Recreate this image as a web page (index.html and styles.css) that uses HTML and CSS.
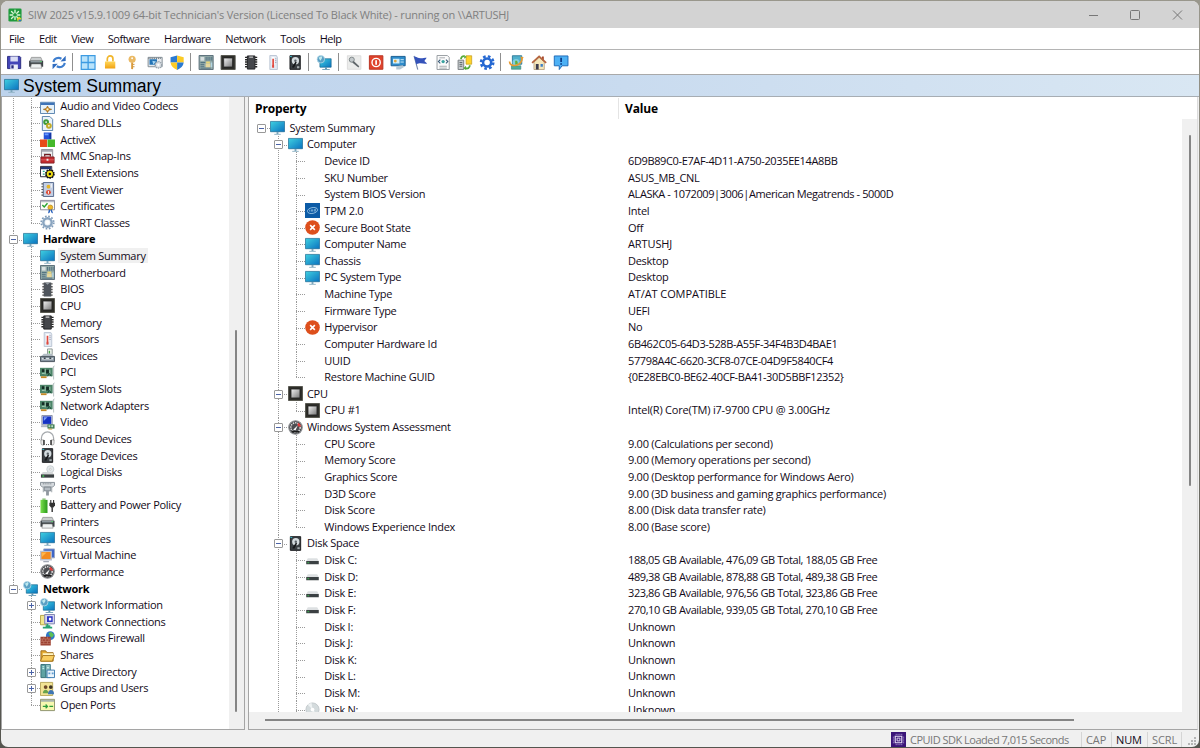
FILE: index.html
```html
<!DOCTYPE html>
<html lang="en">
<head>
<meta charset="utf-8">
<title>SIW 2025</title>
<link rel="stylesheet" href="styles.css">
</head>
<body>
<svg class="sprite" aria-hidden="true">
  <defs>
    <linearGradient id="g-screen" x1="0" y1="0" x2="1" y2="1"><stop offset="0" stop-color="#3fd0e0"/><stop offset="1" stop-color="#0a72c0"/></linearGradient>
    <linearGradient id="g-chip" x1="0" y1="0" x2="1" y2="1"><stop offset="0" stop-color="#f4f4f4"/><stop offset="1" stop-color="#777"/></linearGradient>
    <linearGradient id="g-gold" x1="0" y1="0" x2="0" y2="1"><stop offset="0" stop-color="#ffd75a"/><stop offset="1" stop-color="#f0a010"/></linearGradient>
    <linearGradient id="g-green" x1="0" y1="0" x2="1" y2="0"><stop offset="0" stop-color="#7be04e"/><stop offset="1" stop-color="#2a9a1c"/></linearGradient>
  </defs>
  <symbol id="logo" viewBox="0 0 16 16"><rect x=".5" y=".5" width="15" height="15" rx="1.5" fill="#1f9a3c"/><g stroke="#d8f5d4" stroke-width="1.6" stroke-linecap="round"><path d="M8 2.5v3M8 10v3M2.5 8h3M10.500 8h3M4 4l2 2M10 10l2 2M4 12l2-2M10 6l2-2"/></g><path d="M10 12l3-2 2 2v3h-4z" fill="#e8d02a"/><path d="M12 13h3v2h-3z" fill="#2a72c8"/></symbol>
  <symbol id="monitor" viewBox="0 0 16 16"><path d="M.5 1.500h15v11H.5z" fill="url(#g-screen)" stroke="#14638c" stroke-width=".7"/><path d="M7 12.800h2V15H7z" fill="#7aa4bb"/><path d="M4.500 15.300h7" stroke="#8fb2c4"/></symbol>
  <symbol id="net" viewBox="0 0 16 16"><path d="M3.500 4h12v9h-12z" fill="url(#g-screen)" stroke="#14638c" stroke-width=".7"/><path d="M9 13h2v2H9z" fill="#5d93b0"/><path d="M6 15.500h8" stroke="#6f9fb8"/><circle cx="4.500" cy="4.500" r="4" fill="#5a9fc4" stroke="#b9dcea" stroke-width=".8"/><path d="M2 3l3-2 1 2-2 3zM5 6l2-1" fill="#bde8ee"/></symbol>
  <symbol id="codec" viewBox="0 0 16 16"><path d="M.5 3.500h15v12H.5z" fill="#e6f2fa" stroke="#547fae"/><path d="M1 4h14v2.500H1z" fill="#3f74b8"/><path d="M3.500 11l3-.800L8 7.500l1.500 2.700 3 .800-3 .900L8 14.500l-1.500-2.600z" fill="#d58a18" stroke="#8a5a18" stroke-width=".6"/><circle cx="8" cy="11" r="1.200" fill="#fff4c0"/></symbol>
  <symbol id="dll" viewBox="0 0 16 16"><path d="M2.500.5h8l3 3v12h-11z" fill="#e9f2fb" stroke="#5580aa"/><circle cx="6.500" cy="6.500" r="2" fill="#fff" stroke="#3c9a38" stroke-width="2.200"/><circle cx="9.500" cy="10.500" r="2" fill="#fff" stroke="#c2ac28" stroke-width="2.200"/></symbol>
  <symbol id="activex" viewBox="0 0 16 16"><path d="M4 .5h8V8H4z" fill="#2452d8"/><path d="M12 .5V8l-2-1V2z" fill="#1436a0"/><path d="M0 8h7.500v8H0z" fill="#e84a18"/><path d="M8 8h8v8H8z" fill="#45b82a"/><path d="M5 1.500h4v2H5z" fill="#6a9cff"/></symbol>
  <symbol id="mmc" viewBox="0 0 16 16"><path d="M1.500.5h12v9h-12z" fill="#f1f1f1" stroke="#8a8a92"/><path d="M2 1h11v2H2z" fill="#a5a7b0"/><path d="M4 5h7" stroke="#b5b5b5"/><path d="M1 8.500h14v6.500H1z" fill="#c42b2e" stroke="#862024"/><path d="M5 8V6h6v2" fill="none" stroke="#711c20" stroke-width="1.300"/><path d="M1 11.500h14" stroke="#e07a78" stroke-width=".7"/><path d="M7 10.500h2v2H7z" fill="#eee"/></symbol>
  <symbol id="shell" viewBox="0 0 16 16"><path d="M.5 1.500h12v11H.5z" fill="#fff" stroke="#223"/><path d="M1 2h11v2.500H1z" fill="#223a78"/><path d="M3 6h2v1.500H3zM3 9h2v1.500H3z" fill="#29ab90"/><circle cx="10.500" cy="9.500" r="4.300" fill="#111" stroke="#111" stroke-width="1.800" stroke-dasharray="1.700 1"/><circle cx="10.500" cy="9.500" r="3.300" fill="#f1de16"/><circle cx="10.500" cy="9.500" r="1.300" fill="#111"/></symbol>
  <symbol id="event" viewBox="0 0 16 16"><path d="M3.500.5h11v15h-11z" fill="#c3cfe4" stroke="#53678c"/><path d="M1.500 2h2M1.500 5h2M1.500 8h2M1.500 11h2M1.500 14h2" stroke="#555" stroke-width="1.200"/><circle cx="9" cy="5" r="2" fill="#e6b426"/><circle cx="9" cy="11" r="2.600" fill="#db4a33"/><path d="M9 9.500v3M12 2v4" stroke="#fff"/></symbol>
  <symbol id="cert" viewBox="0 0 16 16"><path d="M.5 1.500h15v10H.5z" fill="#fcfcf5" stroke="#889"/><path d="M1 2h14v1.500H1z" fill="#b7bdc7"/><path d="M2.500 6.500l2 2 3.500-4" fill="none" stroke="#25a32e" stroke-width="1.500"/><circle cx="11" cy="9" r="2.600" fill="#efb827" stroke="#a87713" stroke-width=".6"/><path d="M9.500 11l-1 4.500 2-1 .5-3zM12.500 11l1.500 4.500-2-1-.8-3z" fill="#2c64bd"/></symbol>
  <symbol id="gear" viewBox="0 0 16 16"><circle cx="8" cy="8" r="6.700" fill="none" stroke="#7e9ab8" stroke-width="1.800" stroke-dasharray="1.800 1.700"/><circle cx="8" cy="8" r="4.500" fill="#e7eef5" stroke="#8aa5c0" stroke-width="2.600"/><circle cx="8" cy="8" r="2.300" fill="#fff"/></symbol>
  <symbol id="board" viewBox="0 0 16 16"><path d="M.5.5h15v15H.5z" fill="#93aaa8" stroke="#566b78"/><path d="M2 2h4v4H2z" fill="#d8dfe0"/><path d="M8 2v4M10 2v4M12 2v4M14 2v4M2 8h5M2 10h4M2 12h4M2 14h11" stroke="#3f6275" stroke-width=".8"/><path d="M8 7h4v2H8z" fill="#e8d777"/><path d="M7.500 9h5v4h-5z" fill="#e6d79c"/><path d="M13 8h1.500v5H13z" fill="#b4d6e4"/></symbol>
  <symbol id="bios" viewBox="0 0 16 16"><path d="M4 .5h8v15H4z" fill="#4f555c"/><path d="M2.500 2h2M2.500 5h2M2.500 8h2M2.500 11h2M2.500 14h2M11.500 2h2M11.500 5h2M11.500 8h2M11.500 11h2M11.500 14h2" stroke="#555" stroke-width="1.500"/><path d="M6 1h4l-2 2z" fill="#9ba3aa"/></symbol>
  <symbol id="chip" viewBox="0 0 16 16"><path d="M.5.5h15v15H.5z" fill="#2e2e2a" stroke="#55554d"/><path d="M3.300 3.300h9.400v9.400H3.300z" fill="url(#g-chip)" stroke="#111" stroke-width=".6"/></symbol>
  <symbol id="mem" viewBox="0 0 16 16"><path d="M4 1h8v14H4z" fill="#45474b" stroke="#1f2022"/><path d="M1.500 2.500h2.500M1.500 5h2.500M1.500 7.500h2.500M1.500 10h2.500M1.500 12.500h2.500M12 2.500h2.500M12 5h2.500M12 7.500h2.500M12 10h2.500M12 12.500h2.500" stroke="#272727" stroke-width="1.500"/><path d="M6 1.500h4v1.500H6z" fill="#c8c8c8"/></symbol>
  <symbol id="thermo" viewBox="0 0 16 16"><path d="M4.500.5h7l1 2v13h-8z" fill="#e3e9f2" stroke="#b9c4d3"/><path d="M8 2v8" stroke="#fff" stroke-width="3"/><path d="M8 4v8.500" stroke="#e0493f" stroke-width="1.800"/><path d="M7 11h2v2.500H7z" fill="#e0493f"/><path d="M10 4h1.500M10 6h1.500M10 8h1.500" stroke="#aab"/></symbol>
  <symbol id="devices" viewBox="0 0 16 16"><path d="M8 1h5v6H8z" fill="#edf2ed" stroke="#8a9492"/><path d="M10 3v3" stroke="#46a344" stroke-width="1.500"/><path d="M1 9l3-3h8l3 3z" fill="#b3bec5"/><path d="M.5 9h15v5.500H.5z" fill="#8794a0" stroke="#47525b"/><path d="M2 11.500h12" stroke="#dde3e7" stroke-width="1.500"/><path d="M4 11h2M10 11h2" stroke="#3a444c" stroke-width="1.500"/></symbol>
  <symbol id="card" viewBox="0 0 16 16"><path d="M0 3h13.500v9H0z" fill="#4c8468"/><path d="M2 4.500h3v3H2zM6.500 5h3v4h-3z" fill="#142d25"/><path d="M2 9h3M10.500 5v5M5.500 4v6" stroke="#a8cdb6"/><path d="M1 12h6v2H1z" fill="#c58a28"/><path d="M8 12l2-3 2 3" fill="none" stroke="#143" stroke-width="1"/><path d="M14.500 1.500v14M13.500 2.500l2-1.500" fill="none" stroke="#b5c0c0"/></symbol>
  <symbol id="video" viewBox="0 0 16 16"><path d="M2 .5h11v10H2z" fill="#dbe0ec" stroke="#888fa5"/><path d="M3 1.500h9v8H3z" fill="#1633c4"/><path d="M4 2.500h4l-4 4z" fill="#7fa3f8"/><path d="M1 11h8v2H1z" fill="#b3b8c2"/><path d="M8 10h7.500v4.500H8z" fill="#3c7950"/><path d="M9 11h2v2H9zM12 11h2v2h-2z" fill="#bdddc5"/><path d="M9 14.500h4v1H9z" fill="#cc9b38"/></symbol>
  <symbol id="phones" viewBox="0 0 16 16"><path d="M1.500 11V7.500a6.500 6.500 0 0 1 13 0V11" fill="none" stroke="#a5a9ad" stroke-width="1.300"/><path d="M1 9.500h3v5.500H3a2 2 0 0 1-2-2zM15 9.500h-3v5.500h1a2 2 0 0 0 2-2z" fill="#eee" stroke="#888" stroke-width=".7"/><path d="M3.500 9.500H5v5.500H3.500zM11 9.500h1.500v5.500H11z" fill="#2c2c2c"/><path d="M6.500 14.500h1M8.500 14.500h1" stroke="#333"/></symbol>
  <symbol id="hdd" viewBox="0 0 16 16"><path d="M2.500.7h11v14.600h-11z" fill="#3a3f43" stroke="#17191b"/><circle cx="8.300" cy="6" r="3.900" fill="#d5dcdf"/><circle cx="8.300" cy="6" r="1.300" fill="#596167"/><path d="M4.500 13l4-6 1.200 1-3 5.500z" fill="#16181a"/><path d="M10 12h2.500v2H10z" fill="#a4abad"/><path d="M2.500 1.500h2" stroke="#3ac5d5"/></symbol>
  <symbol id="ldisk" viewBox="0 0 16 16"><circle cx="11" cy="4.500" r="3.800" fill="#e4e9eb" stroke="#bcc4c8" stroke-width=".7"/><circle cx="11" cy="4.500" r="1" fill="#fff" stroke="#aaa" stroke-width=".5"/><path d="M3 7.500h10l2 2.500H1z" fill="#d4d7d9"/><path d="M1 10h14v3.500H1z" fill="#3b4043"/><path d="M2.500 11h2v1.500h-2z" fill="#45d15a"/></symbol>
  <symbol id="disk" viewBox="0 0 16 16"><path d="M3 5.500h10l1.700 3H1.300z" fill="#dde0e2"/><path d="M1.300 8.500h13.400v3.500H1.300z" fill="#3b4043"/><path d="M2.500 9.500h2v1.500h-2z" fill="#3b9a4c"/></symbol>
  <symbol id="cd" viewBox="0 0 16 16"><circle cx="8" cy="8" r="7" fill="#d4dbdd" stroke="#c2c9cc"/><path d="M8 8L3 3a7 7 0 0 1 4-2zM8 8l5 5a7 7 0 0 1-4 2z" fill="#eef2f3"/><circle cx="8" cy="8" r="2" fill="#fff"/></symbol>
  <symbol id="ports" viewBox="0 0 16 16"><path d="M.5 1.500h15v3l-2 2h-11l-2-2z" fill="#d4d9dd" stroke="#858e95"/><path d="M3 3h10" stroke="#666e75" stroke-dasharray="1 1"/><path d="M4.500 6.500h7v4h-7z" fill="#b4bbc2" stroke="#7a838b"/><path d="M6.500 10.500h3v5h-3z" fill="#90989f"/><path d="M3.500 7v5M12.500 7v5" stroke="#9aa2a8"/></symbol>
  <symbol id="battery" viewBox="0 0 16 16"><path d="M.5 2H8v14H.5z" fill="url(#g-green)"/><path d="M2.500.5h3.500V2H2.500z" fill="#83bd70"/><path d="M11.500 2v4M14.500 2v4" stroke="#333" stroke-width="1.200"/><path d="M10 5h6v3l-2 2.500h-2L10 8z" fill="#333"/><path d="M13 10v5" stroke="#333" stroke-width="1.500"/></symbol>
  <symbol id="printer" viewBox="0 0 16 16"><path d="M3 2.500h10l1.500 3.500h-13z" fill="#c9cdce" stroke="#777" stroke-width=".6"/><path d="M.5 6h15v6.500H.5z" fill="#3d4347"/><path d="M2 6h12v2H2z" fill="#8d979d"/><path d="M3 9.500h10l1 4.500H2z" fill="#eff2f3" stroke="#777" stroke-width=".6"/><path d="M12 7h2" stroke="#54ce66"/></symbol>
  <symbol id="vm" viewBox="0 0 16 16"><path d="M4 1h11.500v9.500H4z" fill="#3d65c8" stroke="#9aa6c4"/><path d="M.8 3.500h11.200v9H.8z" fill="#f38b21" stroke="#b9bfd0" stroke-width="1.400"/><path d="M2 4.700h5l-5 5z" fill="#ffb64b"/><path d="M3.500 14.500h6" stroke="#a3a9b6" stroke-width="1.500"/></symbol>
  <symbol id="gauge" viewBox="0 0 16 16"><circle cx="8" cy="8" r="7.200" fill="#4c4e52" stroke="#8e9093" stroke-width="1.200"/><circle cx="8" cy="8" r="5" fill="none" stroke="#ddd" stroke-width="1.600" stroke-dasharray="1.500 1"/><path d="M11 3a6 6 0 0 1 3 4l-3 0-1-2z" fill="#e33b3b"/><path d="M5.500 10.500l5-5-2.500 5.500z" fill="#fff"/><path d="M4 12.500h8" stroke="#1c1c1c" stroke-width="1.500"/></symbol>
  <symbol id="conn" viewBox="0 0 16 16"><path d="M.5 1.500h7v10h-7z" fill="#f1e68c" stroke="#b3a245"/><path d="M5 .5h10.500v10H5z" fill="#d5d7ee" stroke="#7c80ad"/><path d="M7.500 2.500h6v6h-6z" fill="#2932c4"/><path d="M9.500 4H12v3H9.500z" fill="#fff"/><path d="M8 10.500v3M3 14.500h10" stroke="#27a273" stroke-width="1.800"/><path d="M6 12h5v3H6z" fill="#27a273"/></symbol>
  <symbol id="firewall" viewBox="0 0 16 16"><circle cx="11" cy="5" r="4.700" fill="#2d76c9"/><path d="M9 2l3-1 3 3-2 3-2-1z" fill="#5cc054"/><path d="M.5 6h11v9.500H.5z" fill="#9b4031"/><path d="M.5 8.500h11M.5 11h11M.5 13.500h11M4 6v2.500M8 6v2.500M2.500 8.500V11M6 8.500V11M9.500 8.500V11M4 11v2.500M8 11v2.500" stroke="#c98573" stroke-width=".6"/></symbol>
  <symbol id="share" viewBox="0 0 16 16"><path d="M1 3h5l1.500 2H14v9H1z" fill="#e5ad35" stroke="#9c6b16"/><path d="M3 5.500h11V9H3z" fill="#fff6c4"/><path d="M.5 14L3 8h12.500l-2.500 6z" fill="#f8cd5f" stroke="#a87720"/></symbol>
  <symbol id="ad" viewBox="0 0 16 16"><path d="M1 .5h5v14H1z" fill="#5ea2a2" stroke="#346d74"/><path d="M6 .5h5v14H6z" fill="#8dbfc0" stroke="#3d7c84"/><path d="M2.500 3h2M2.500 5h2M7.500 4h2" stroke="#dff"/><path d="M7.500 6.500h8v8h-8z" fill="#eaf4fb" stroke="#3877ae"/><path d="M9 9h2v2H9zM12.500 9h2v2h-2z" fill="#5f9bd0"/></symbol>
  <symbol id="users" viewBox="0 0 16 16"><path d="M.5 1.500h13v14H.5z" fill="#f2e394" stroke="#b8a75a"/><circle cx="6" cy="6.500" r="2" fill="#6e4928"/><circle cx="11.500" cy="6.500" r="2" fill="#3d3325"/><path d="M3 13c0-5 6-5 6 0z" fill="#68a34c"/><path d="M8.500 14c0-6 6.500-6 6.500 0z" fill="#3f76b4"/></symbol>
  <symbol id="openports" viewBox="0 0 16 16"><path d="M.5 2.500h15v12H.5z" fill="#f7f8b0" stroke="#8b8f6a"/><path d="M1 3h14v2H1z" fill="#a9b5ad"/><path d="M3 10h5M6 8l2 2-2 2M10 10h4" fill="none" stroke="#2f9c3c" stroke-width="1.300"/></symbol>
  <symbol id="intel" viewBox="0 0 16 16"><path d="M0 0h16v16H0z" fill="#0c5ba6"/><ellipse cx="8" cy="8" rx="5.500" ry="3.100" fill="none" stroke="#a9d2ee" stroke-width=".8" transform="rotate(-12 8 8)"/><path d="M5 7.200v2M6.800 9.200V7.300h1.400v1.900M10 6.500v2.700M11.300 6v3" fill="none" stroke="#bfe0f6" stroke-width=".6"/></symbol>
  <symbol id="cross" viewBox="0 0 16 16"><circle cx="8" cy="8" r="7.800" fill="#dd4f1c"/><path d="M5.500 5.500l5 5M10.500 5.500l-5 5" stroke="#fff" stroke-width="1.700"/></symbol>
  <symbol id="save" viewBox="0 0 16 16"><path d="M1 1.500h13l1 1v12H1z" fill="#4446b8" stroke="#272a7e"/><path d="M4 1.500h8v5.500H4z" fill="#d9dcf4"/><path d="M4 10h8v5H4z" fill="#eceef8"/><path d="M5 11h2.500v3.500H5z" fill="#272a7e"/></symbol>
  <symbol id="refresh" viewBox="0 0 16 16"><path d="M2 7.500C2.500 3.500 7 2 10.500 4M14 8.500c-.5 4-5 5.500-8.500 3.500" fill="none" stroke="#3f7fcf" stroke-width="2.200"/><path d="M9.500 6.800L15 6.500V.8zM6.500 9.200L1 9.500v5.700z" fill="#2f6cc0"/></symbol>
  <symbol id="win" viewBox="0 0 16 16"><path d="M0 0h16v16H0z" fill="#3c9be2"/><path d="M1.300 1.300h6v6h-6zM8.700 1.300h6v6h-6zM1.300 8.700h6v6h-6zM8.700 8.700h6v6h-6z" fill="#b9e3fb"/></symbol>
  <symbol id="lock" viewBox="0 0 16 16"><path d="M5 7V4a3 3 0 0 1 6 0v3" fill="none" stroke="#f1b62c" stroke-width="1.800"/><path d="M2.500 7h11v7.500h-11z" fill="url(#g-gold)"/></symbol>
  <symbol id="key" viewBox="0 0 16 16"><circle cx="8" cy="4.500" r="3.800" fill="#eab964"/><circle cx="8" cy="3.500" r="1" fill="#fff"/><path d="M7 8h2v6l-1 1.500-1-1.500z" fill="#d99b3c"/><path d="M9 10h1.500M9 12.500h1.500" stroke="#c58a2f"/></symbol>
  <symbol id="screengear" viewBox="0 0 16 16"><path d="M.5 2.500h15v10H.5z" fill="#e6e9ec" stroke="#7f8a92"/><path d="M2 4.500h8v6H2z" fill="#2474b6"/><path d="M1 3.500h14" stroke="#45505a" stroke-dasharray="1 1"/><path d="M5 6l4 1-3 3z" fill="#a4d4f2"/><circle cx="11.500" cy="10.500" r="3.400" fill="#dfe3e7" stroke="#98a3ac" stroke-width="1.400" stroke-dasharray="1.500 .7"/><circle cx="11.500" cy="10.500" r="1.200" fill="#fff"/></symbol>
  <symbol id="shield" viewBox="0 0 16 16"><path d="M8 .5l-7 2V8h7z" fill="#2b7ad2"/><path d="M8 .5l7 2V8H8z" fill="#fbcb26"/><path d="M1 8h7v8C4 14 1.500 12 1 8z" fill="#fbcb26"/><path d="M15 8H8v8c4-2 6.500-4 7-8z" fill="#2b7ad2"/></symbol>
  <symbol id="tool" viewBox="0 0 16 16"><path d="M.8.8h14.400v14.400H.8z" fill="#ebeceb" stroke="#dcdcdc"/><circle cx="5.500" cy="5" r="2.700" fill="#c2c8cb" stroke="#7d8588"/><path d="M7.500 6.500l6 5.500-1 1.300-6.500-5.300z" fill="#5f666a"/></symbol>
  <symbol id="power" viewBox="0 0 16 16"><path d="M.8.8h14.400v14.400H.8z" fill="#df432c" stroke="#b8301e"/><circle cx="8" cy="8" r="4.400" fill="none" stroke="#fff" stroke-width="1.500"/><path d="M8 5.500v5" stroke="#fff" stroke-width="1.800"/></symbol>
  <symbol id="remote" viewBox="0 0 16 16"><path d="M.5 1.500h15v10H.5z" fill="#2e8ccb" stroke="#165b90"/><path d="M2.500 4h7v5h-7z" fill="#d3effa"/><circle cx="5" cy="6.500" r="1.500" fill="#e0a53c"/><path d="M10.500 5h3.500M10.500 7.500h3.500" stroke="#d3effa"/><path d="M6 12l7-1 1 2-4 2.500H6z" fill="#b5c8d4"/></symbol>
  <symbol id="flag" viewBox="0 0 16 16"><path d="M1.500 1l4 14.500" stroke="#7689ad" stroke-width="1.200"/><path d="M1.500 1.500c3 0 4 2 7 2s4-.5 6.500-.5L12.500 6.500l3 2.500c-4 1-7-1.500-11.500 1z" fill="#3452ba"/></symbol>
  <symbol id="doc" viewBox="0 0 16 16"><path d="M1.500.5h11l2 2v13h-13z" fill="#fbfbfb" stroke="#93999e"/><path d="M4 3h6M4 12h8M4 14h8" stroke="#a4a9ad"/><path d="M5 5L3 7l2 2M11 5l2 2-2 2" fill="none" stroke="#3c5d7a" stroke-width="1.200"/><circle cx="8" cy="7" r="1.800" fill="#3ba3a0"/></symbol>
  <symbol id="dbsync" viewBox="0 0 16 16"><path d="M9 .8h6v9H9z" fill="#ffd329" stroke="#bd9416" stroke-width=".7"/><path d="M.5 5.500h6v10h-6z" fill="#c6cacd" stroke="#777c80"/><path d="M2 8h3M2 10h3M2 12h3" stroke="#5d6468"/><path d="M3.500 4.500C4 1.500 6 1 7 1.500M13 11c0 3-2.500 4-5 3" fill="none" stroke="#53aa39" stroke-width="1.900"/><path d="M7 0l2.500 2L7 4zM9 11.500L6 14l3 2z" fill="#53aa39"/></symbol>
  <symbol id="cog" viewBox="0 0 16 16"><circle cx="8" cy="8" r="6.600" fill="none" stroke="#2568d2" stroke-width="2.600" stroke-dasharray="2.800 2.384"/><circle cx="8" cy="8" r="4.300" fill="none" stroke="#2568d2" stroke-width="2.700"/></symbol>
  <symbol id="update" viewBox="0 0 16 16"><path d="M4 .8h10v9H4z" fill="#4fb0cc" stroke="#2f7c9a"/><path d="M3 11.500h10v3.700H3z" fill="#4fae9a" stroke="#2f7c7a" stroke-width=".6"/><circle cx="8" cy="8" r="3.800" fill="#82cfdf"/><path d="M1 7c0 6 11 6 13.500-2.500" fill="none" stroke="#e79a31" stroke-width="1.800"/><path d="M12.500 1.500l3.500 1-2 3.500z" fill="#e79a31"/><path d="M7 6h2l1 3-3 1z" fill="#63ae3a"/></symbol>
  <symbol id="home" viewBox="0 0 16 16"><path d="M11 1.500h2V6h-2z" fill="#a74629"/><path d="M2.500 7.500L8 2.500l5.500 5v8h-11z" fill="#f6e7bb" stroke="#a08764" stroke-width=".7"/><path d="M.5 8.500L8 1.500l7.500 7" fill="none" stroke="#b5653f" stroke-width="1.900"/><path d="M4.500 9.500h3v6h-3z" fill="#3d3b4c"/><path d="M9.500 9.500h2.500v3H9.500z" fill="#3e80c7"/></symbol>
  <symbol id="info" viewBox="0 0 16 16"><path d="M.7 1h14.600v10.500H9l-3 4v-4H.7z" fill="#4db1f5" stroke="#1b68b6"/><path d="M8 3v4.500M8 8.700v1.600" stroke="#0c3d88" stroke-width="1.900"/></symbol>
  <symbol id="cpuid" viewBox="0 0 16 16"><path d="M0 0h16v16H0z" fill="#3a1478"/><path d="M4.500 4.500h7v7h-7z" fill="none" stroke="#e5dcf5" stroke-width="1.200"/><path d="M6.500 6.500h3v3h-3z" fill="none" stroke="#e5dcf5"/><path d="M5 2.500h7M5 13.500h7M2.500 5v7M13.500 5v7" stroke="#bba8e0" stroke-dasharray="1 1"/></symbol>
</svg>

<div class="window">
  <header class="titlebar">
    <svg class="icon"><use href="#logo"/></svg>
    <span class="title">SIW 2025 v15.9.1009 64-bit Technician's Version (Licensed To Black White) - running on \\ARTUSHJ</span>
    <svg class="controls" viewBox="0 0 94 12"><path d="M0 6.500h9M41.500 2.500a1 1 0 0 1 1-1h7a1 1 0 0 1 1 1v7a1 1 0 0 1-1 1h-7a1 1 0 0 1-1-1zM84 1.500l9 9M93 1.500l-9 9"/></svg>
  </header>
  <nav class="menu"><span>File</span><span>Edit</span><span>View</span><span>Software</span><span>Hardware</span><span>Network</span><span>Tools</span><span>Help</span></nav>
  <div class="toolbar">
    <svg class="icon"><use href="#save"/></svg><svg class="icon"><use href="#printer"/></svg><svg class="icon"><use href="#refresh"/></svg>
    <i></i>
    <svg class="icon"><use href="#win"/></svg><svg class="icon"><use href="#lock"/></svg><svg class="icon"><use href="#key"/></svg><svg class="icon"><use href="#screengear"/></svg><svg class="icon"><use href="#shield"/></svg>
    <i></i>
    <svg class="icon"><use href="#board"/></svg><svg class="icon"><use href="#chip"/></svg><svg class="icon"><use href="#mem"/></svg><svg class="icon"><use href="#thermo"/></svg><svg class="icon"><use href="#hdd"/></svg>
    <i></i>
    <svg class="icon"><use href="#net"/></svg>
    <i></i>
    <svg class="icon"><use href="#tool"/></svg><svg class="icon"><use href="#power"/></svg><svg class="icon"><use href="#remote"/></svg><svg class="icon"><use href="#flag"/></svg><svg class="icon"><use href="#doc"/></svg><svg class="icon"><use href="#dbsync"/></svg><svg class="icon"><use href="#cog"/></svg>
    <i></i>
    <svg class="icon"><use href="#update"/></svg><svg class="icon"><use href="#home"/></svg><svg class="icon"><use href="#info"/></svg>
  </div>
  <div class="heading"><svg class="icon"><use href="#monitor"/></svg><h1>System Summary</h1></div>

  <main class="panes">
    <section class="nav-pane">
      <ul class="tree nav-tree">
        <li class="branch">
          <ul>
            <li><div class="row"><svg class="icon"><use href="#codec"/></svg><span>Audio and Video Codecs</span></div></li>
            <li><div class="row"><svg class="icon"><use href="#dll"/></svg><span>Shared DLLs</span></div></li>
            <li><div class="row"><svg class="icon"><use href="#activex"/></svg><span>ActiveX</span></div></li>
            <li><div class="row"><svg class="icon"><use href="#mmc"/></svg><span>MMC Snap-Ins</span></div></li>
            <li><div class="row"><svg class="icon"><use href="#shell"/></svg><span>Shell Extensions</span></div></li>
            <li><div class="row"><svg class="icon"><use href="#event"/></svg><span>Event Viewer</span></div></li>
            <li><div class="row"><svg class="icon"><use href="#cert"/></svg><span>Certificates</span></div></li>
            <li><div class="row"><svg class="icon"><use href="#gear"/></svg><span>WinRT Classes</span></div></li>
          </ul>
        </li>
        <li class="branch">
          <div class="row top minus"><svg class="icon"><use href="#monitor"/></svg><span>Hardware</span></div>
          <ul>
            <li><div class="row selected"><svg class="icon"><use href="#monitor"/></svg><span>System Summary</span></div></li>
            <li><div class="row"><svg class="icon"><use href="#board"/></svg><span>Motherboard</span></div></li>
            <li><div class="row"><svg class="icon"><use href="#bios"/></svg><span>BIOS</span></div></li>
            <li><div class="row"><svg class="icon"><use href="#chip"/></svg><span>CPU</span></div></li>
            <li><div class="row"><svg class="icon"><use href="#mem"/></svg><span>Memory</span></div></li>
            <li><div class="row"><svg class="icon"><use href="#thermo"/></svg><span>Sensors</span></div></li>
            <li><div class="row"><svg class="icon"><use href="#devices"/></svg><span>Devices</span></div></li>
            <li><div class="row"><svg class="icon"><use href="#card"/></svg><span>PCI</span></div></li>
            <li><div class="row"><svg class="icon"><use href="#card"/></svg><span>System Slots</span></div></li>
            <li><div class="row"><svg class="icon"><use href="#card"/></svg><span>Network Adapters</span></div></li>
            <li><div class="row"><svg class="icon"><use href="#video"/></svg><span>Video</span></div></li>
            <li><div class="row"><svg class="icon"><use href="#phones"/></svg><span>Sound Devices</span></div></li>
            <li><div class="row"><svg class="icon"><use href="#hdd"/></svg><span>Storage Devices</span></div></li>
            <li><div class="row"><svg class="icon"><use href="#ldisk"/></svg><span>Logical Disks</span></div></li>
            <li><div class="row"><svg class="icon"><use href="#ports"/></svg><span>Ports</span></div></li>
            <li><div class="row"><svg class="icon"><use href="#battery"/></svg><span>Battery and Power Policy</span></div></li>
            <li><div class="row"><svg class="icon"><use href="#printer"/></svg><span>Printers</span></div></li>
            <li><div class="row"><svg class="icon"><use href="#monitor"/></svg><span>Resources</span></div></li>
            <li><div class="row"><svg class="icon"><use href="#vm"/></svg><span>Virtual Machine</span></div></li>
            <li><div class="row"><svg class="icon"><use href="#gauge"/></svg><span>Performance</span></div></li>
          </ul>
        </li>
        <li class="branch">
          <div class="row top minus"><svg class="icon"><use href="#net"/></svg><span>Network</span></div>
          <ul>
            <li><div class="row plus"><svg class="icon"><use href="#net"/></svg><span>Network Information</span></div></li>
            <li><div class="row"><svg class="icon"><use href="#conn"/></svg><span>Network Connections</span></div></li>
            <li><div class="row"><svg class="icon"><use href="#firewall"/></svg><span>Windows Firewall</span></div></li>
            <li><div class="row"><svg class="icon"><use href="#share"/></svg><span>Shares</span></div></li>
            <li><div class="row plus"><svg class="icon"><use href="#ad"/></svg><span>Active Directory</span></div></li>
            <li><div class="row plus"><svg class="icon"><use href="#users"/></svg><span>Groups and Users</span></div></li>
            <li><div class="row"><svg class="icon"><use href="#openports"/></svg><span>Open Ports</span></div></li>
          </ul>
        </li>
      </ul>
      <div class="vscroll nav-scroll"><b></b></div>
    </section>

    <section class="detail-pane">
      <div class="columns"><span class="col-property">Property</span><span class="col-value">Value</span></div>
      <div class="detail-body">
        <ul class="tree detail-tree">
          <li>
            <div class="row minus"><svg class="icon"><use href="#monitor"/></svg><span>System Summary</span></div>
            <ul>
              <li>
                <div class="row minus"><svg class="icon"><use href="#monitor"/></svg><span>Computer</span></div>
                <ul>
                  <li><div class="row"><svg class="icon"></svg><span>Device ID</span><em class="code">6D9B89C0-E7AF-4D11-A750-2035EE14A8BB</em></div></li>
                  <li><div class="row"><svg class="icon"></svg><span>SKU Number</span><em>ASUS_MB_CNL</em></div></li>
                  <li><div class="row"><svg class="icon"></svg><span>System BIOS Version</span><em class="figures">ALASKA - 1072009|3006|American Megatrends - 5000D</em></div></li>
                  <li><div class="row"><svg class="icon"><use href="#intel"/></svg><span>TPM 2.0</span><em>Intel</em></div></li>
                  <li><div class="row"><svg class="icon"><use href="#cross"/></svg><span>Secure Boot State</span><em>Off</em></div></li>
                  <li><div class="row"><svg class="icon"><use href="#monitor"/></svg><span>Computer Name</span><em class="wide">ARTUSHJ</em></div></li>
                  <li><div class="row"><svg class="icon"><use href="#monitor"/></svg><span>Chassis</span><em>Desktop</em></div></li>
                  <li><div class="row"><svg class="icon"><use href="#monitor"/></svg><span>PC System Type</span><em>Desktop</em></div></li>
                  <li><div class="row"><svg class="icon"></svg><span>Machine Type</span><em class="wide">AT/AT COMPATIBLE</em></div></li>
                  <li><div class="row"><svg class="icon"></svg><span>Firmware Type</span><em>UEFI</em></div></li>
                  <li><div class="row"><svg class="icon"><use href="#cross"/></svg><span>Hypervisor</span><em>No</em></div></li>
                  <li><div class="row"><svg class="icon"></svg><span>Computer Hardware Id</span><em class="code">6B462C05-64D3-528B-A55F-34F4B3D4BAE1</em></div></li>
                  <li><div class="row"><svg class="icon"></svg><span>UUID</span><em class="code">57798A4C-6620-3CF8-07CE-04D9F5840CF4</em></div></li>
                  <li><div class="row"><svg class="icon"></svg><span>Restore Machine GUID</span><em class="code">{0E28EBC0-BE62-40CF-BA41-30D5BBF12352}</em></div></li>
                </ul>
              </li>
              <li>
                <div class="row minus"><svg class="icon"><use href="#chip"/></svg><span>CPU</span></div>
                <ul>
                  <li><div class="row"><svg class="icon"><use href="#chip"/></svg><span>CPU #1</span><em class="cpu">Intel(R) Core(TM) i7-9700 CPU @ 3.00GHz</em></div></li>
                </ul>
              </li>
              <li>
                <div class="row minus"><svg class="icon"><use href="#gauge"/></svg><span>Windows System Assessment</span></div>
                <ul>
                  <li><div class="row"><svg class="icon"></svg><span>CPU Score</span><em>9.00 (Calculations per second)</em></div></li>
                  <li><div class="row"><svg class="icon"></svg><span>Memory Score</span><em>9.00 (Memory operations per second)</em></div></li>
                  <li><div class="row"><svg class="icon"></svg><span>Graphics Score</span><em>9.00 (Desktop performance for Windows Aero)</em></div></li>
                  <li><div class="row"><svg class="icon"></svg><span>D3D Score</span><em>9.00 (3D business and gaming graphics performance)</em></div></li>
                  <li><div class="row"><svg class="icon"></svg><span>Disk Score</span><em>8.00 (Disk data transfer rate)</em></div></li>
                  <li><div class="row"><svg class="icon"></svg><span>Windows Experience Index</span><em>8.00 (Base score)</em></div></li>
                </ul>
              </li>
              <li class="open">
                <div class="row minus"><svg class="icon"><use href="#hdd"/></svg><span>Disk Space</span></div>
                <ul>
                  <li><div class="row"><svg class="icon"><use href="#disk"/></svg><span>Disk C:</span><em class="figures">188,05 GB Available, 476,09 GB Total, 188,05 GB Free</em></div></li>
                  <li><div class="row"><svg class="icon"><use href="#disk"/></svg><span>Disk D:</span><em class="figures">489,38 GB Available, 878,88 GB Total, 489,38 GB Free</em></div></li>
                  <li><div class="row"><svg class="icon"><use href="#disk"/></svg><span>Disk E:</span><em class="figures">323,86 GB Available, 976,56 GB Total, 323,86 GB Free</em></div></li>
                  <li><div class="row"><svg class="icon"><use href="#disk"/></svg><span>Disk F:</span><em class="figures">270,10 GB Available, 939,05 GB Total, 270,10 GB Free</em></div></li>
                  <li><div class="row"><svg class="icon"></svg><span>Disk I:</span><em>Unknown</em></div></li>
                  <li><div class="row"><svg class="icon"></svg><span>Disk J:</span><em>Unknown</em></div></li>
                  <li><div class="row"><svg class="icon"></svg><span>Disk K:</span><em>Unknown</em></div></li>
                  <li><div class="row"><svg class="icon"></svg><span>Disk L:</span><em>Unknown</em></div></li>
                  <li><div class="row"><svg class="icon"></svg><span>Disk M:</span><em>Unknown</em></div></li>
                  <li class="open"><div class="row"><svg class="icon"><use href="#cd"/></svg><span>Disk N:</span><em>Unknown</em></div></li>
                </ul>
              </li>
            </ul>
          </li>
        </ul>
        <div class="vscroll detail-scroll"><b></b></div>
      </div>
      <div class="hscroll"><b></b></div>
    </section>
  </main>

  <footer class="status">
    <svg class="icon"><use href="#cpuid"/></svg>
    <span class="loaded">CPUID SDK Loaded 7,015 Seconds</span>
    <span class="key cap">CAP</span><span class="key num">NUM</span><span class="key scrl">SCRL</span>
    <svg class="grip" viewBox="0 0 10 10"><path d="M7 1h2v2H7zM4 4h2v2H4zM7 4h2v2H7zM1 7h2v2H1zM4 7h2v2H4zM7 7h2v2H7z"/></svg>
  </footer>
</div>
</body>
</html>
```
FILE: styles.css
```css
*, *::before { box-sizing: border-box; }

body {
  margin: 0;
  width: 1200px;
  height: 748px;
  overflow: hidden;
  background: linear-gradient(#99978c, #55554f);
  font: 11px "Open Sans", "Noto Sans", sans-serif;
  letter-spacing: -0.28px;
  color: #120a18;
  white-space: nowrap;
}

ul { margin: 0; padding: 0; list-style: none; }
em { font-style: normal; }
.sprite { position: absolute; width: 0; height: 0; }
.icon { flex: none; width: 15px; height: 15px; }

.window {
  display: flex;
  flex-direction: column;
  width: 1198px;
  height: 746px;
  margin: 1px;
  border-radius: 7px;
  overflow: hidden;
  background: #f0f0f0;
}

/* Title bar and menus */
.titlebar {
  display: flex;
  align-items: center;
  height: 27px;
  padding: 0 16px 0 7px;
  background: #d3d3d3;
  color: #808080;
}
.titlebar .icon { width: 14px; height: 14px; }
.title { margin-left: 6px; letter-spacing: -0.18px; }
.controls { width: 94px; height: 12px; margin-left: auto; overflow: visible; fill: none; stroke: #777; }

.menu {
  display: flex;
  align-items: center;
  gap: 14.6px;
  height: 22px;
  padding-left: 8px;
  letter-spacing: -0.5px;
  background: #fff;
  border-bottom: 1px solid #b4b4b4;
}

.toolbar {
  display: flex;
  align-items: center;
  height: 25px;
  padding-left: 2px;
  background: #fff;
  border-bottom: 1px solid #a9a9a9;
}
.toolbar .icon { width: 22.26px; height: 15px; }
.toolbar i { width: 1px; height: 18px; margin: 0 4px 0 2px; background: #8f8f8f; }

.heading {
  display: flex;
  align-items: center;
  height: 22px;
  padding-left: 3px;
  background: linear-gradient(to right, #bdd3ec, #c5d8ee 40%, #d9e7f3);
  border-bottom: 1px solid #a7adb3;
}
.heading h1 { margin: 2px 0 0 4px; font: 17.6px "Liberation Sans", sans-serif; letter-spacing: -0.05px; color: #000; }

/* Panes */
.panes { display: flex; height: 633px; }
.nav-pane {
  display: flex;
  width: 244px;
  background: #fff;
  border: 1px solid #a5a5a5;
  border-top-width: 0;
}
.nav-tree { flex: 1; padding: 0.6px 0 0 3.4px; }
.detail-pane {
  flex: 1;
  display: flex;
  flex-direction: column;
  margin: 0 1px 0 3px;
  background: #fff;
  border: 1px solid #a5a5a5;
  border-top-width: 0;
  border-right-color: #dcdcdc;
}
.columns {
  display: flex;
  height: 22px;
  padding: 1px 0 0 6px;
  font-size: 12px;
  font-weight: bold;
  letter-spacing: -0.15px;
  color: #000;
  line-height: 21px;
}
.col-property { width: 364px; border-right: 1px solid #e4e4e4; }
.col-value { padding-left: 6px; }
.detail-body { display: flex; height: 593px; overflow: hidden; }
.detail-tree { flex: 1; padding-left: 3.8px; }

/* Scrollbars */
.vscroll { width: 15px; background: #f0f0f0; }
.vscroll b { display: block; width: 2px; border-radius: 1px; background: #858585; }
.nav-scroll b { height: 382px; margin: 233px 0 0 6px; }
.detail-scroll b { height: 351px; margin: 16px 0 0 7px; }
.hscroll { flex: 1; padding: 7px 0 0 16px; background: #f0f0f0; }
.hscroll b { display: block; width: 809px; height: 2px; background: #858585; }

/* Tree: a dotted spine down each list and a dotted spur to each item */
.row { display: flex; align-items: center; height: 16.64px; }
.row > span { margin-left: 4.4px; line-height: 15px; }
.nav-tree .row > span { margin-left: 5.2px; }
.row .icon { margin-top: 1px; }
.tree li {
  padding-left: 17.4px;
  background-image:
    repeating-linear-gradient(to bottom, #9a9a9a 0 1px, transparent 1px 2px),
    repeating-linear-gradient(to right, #9a9a9a 0 1px, transparent 1px 2px);
  background-size: 1px 100%, 9px 1px;
  background-position: 8px 0, 8px 9px;
  background-repeat: no-repeat;
}
.tree li:last-child { background-size: 1px 9px, 9px 1px; }
.tree li.open:last-child { background-size: 1px 100%, 9px 1px; }
.detail-tree > li:last-child { background-size: 0 0, 9px 1px; }
.nav-tree > .branch:first-child { background-size: 1px 100%, 0 0; }

.minus::before, .plus::before {
  content: "";
  flex: none;
  width: 9px;
  height: 9px;
  margin: 2px 4.4px 0 -13.4px;
  border: 1px solid #989898;
  border-radius: 1px;
  background: linear-gradient(#4b63a7, #4b63a7) center / 5px 1px no-repeat, #fff;
}
.plus::before {
  background:
    linear-gradient(#4b63a7, #4b63a7) center / 5px 1px no-repeat,
    linear-gradient(#4b63a7, #4b63a7) center / 1px 5px no-repeat,
    #fff;
}
.top span { font-weight: bold; color: #000; }
.nav-tree .selected > span { margin-left: 3.2px; padding: 0 2px; background: #f0f0f0; }
.row em { width: 554px; margin-left: auto; }
.row .code { letter-spacing: -0.37px; }
.row .figures { letter-spacing: -0.41px; }
.row .wide { letter-spacing: -0.1px; }
.row .cpu { letter-spacing: -0.19px; }

/* Status bar */
.status {
  display: flex;
  align-items: center;
  flex: 1;
  padding: 1px 1px 0 890px;
  color: #777;
}
.loaded { width: 171px; margin-left: 4px; letter-spacing: -0.5px; }
.key { height: 15px; padding-left: 4px; line-height: 15px; letter-spacing: -0.1px; border-left: 1px solid #d5d5d5; }
.cap { width: 30px; }
.num { width: 36px; color: #120a18; }
.scrl { width: 35px; border-right: 1px solid #d5d5d5; }
.grip { width: 10px; height: 10px; margin: 4px 0 0 5px; fill: #b5b5b5; }
```
